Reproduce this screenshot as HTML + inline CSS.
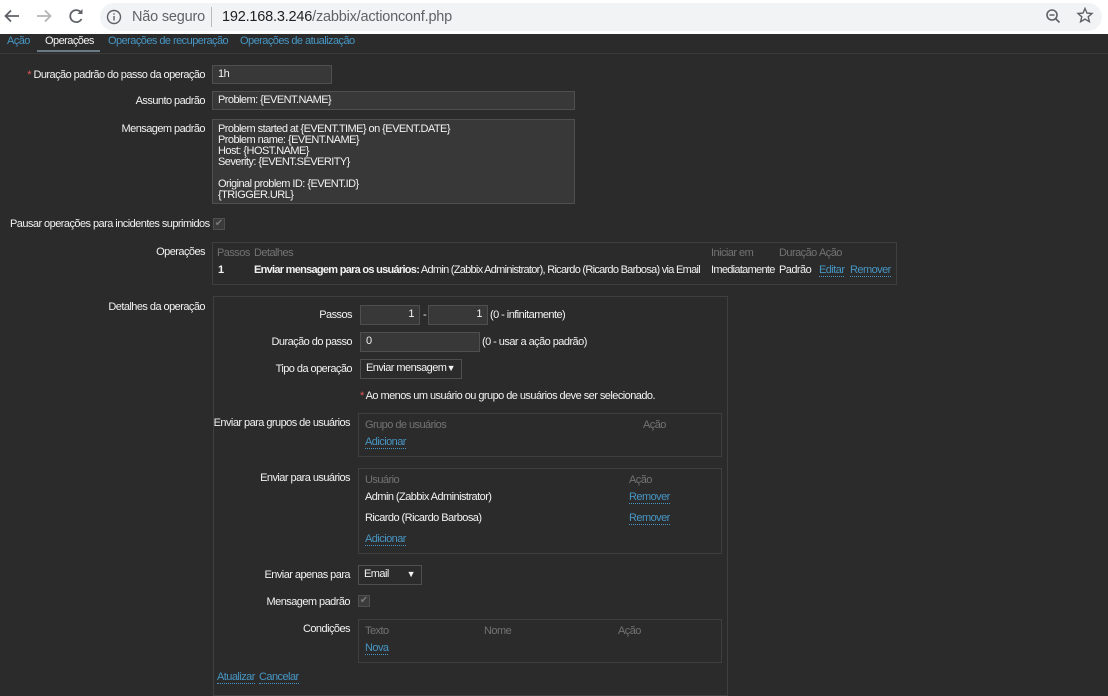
<!DOCTYPE html>
<html><head><meta charset="utf-8"><style>
*{margin:0;padding:0;box-sizing:border-box}
body{width:1108px;height:689px;overflow:hidden;background:#2b2b2b;position:relative;font-family:"Liberation Sans",sans-serif;font-size:11px;color:#f2f2f2;letter-spacing:-0.55px}
.a{position:absolute;white-space:nowrap;line-height:13px}
.r{text-align:right}
.g{color:#737373}
.k{color:#4796c4;border-bottom:1px dotted #4796c4;line-height:12px}
.in{position:absolute;background:#383838;border:1px solid #4f4f4f;color:#f2f2f2;padding:0 5px;line-height:17px;white-space:nowrap}
.box{position:absolute;border:1px solid #3f3f3f}
.cb{position:absolute;width:12px;height:12px;background:#3b3b3b;border:1px solid #4f4f4f;color:#777;font-size:10px;line-height:10px;text-align:center;letter-spacing:0}
.b{font-weight:bold}
</style></head><body>
<div style="position:absolute;left:0;top:0;width:1108px;height:34px;background:#fff"></div>
<div style="position:absolute;left:100px;top:3px;width:1002px;height:28px;background:#f1f3f4;border-radius:14px"></div>
<svg style="position:absolute;left:0;top:0" width="110" height="34">
<path d="M19 16H6M11 10.5L5.5 16 11 21.5" stroke="#5f6368" stroke-width="1.8" fill="none"/>
<path d="M37 16H50M45 10.5L50.5 16 45 21.5" stroke="#b5b5b5" stroke-width="1.8" fill="none"/>
<path d="M81 12.5A6 6 0 1 0 81.5 19" stroke="#5f6368" stroke-width="1.8" fill="none"/><path d="M82.5 9v5h-5z" fill="#5f6368"/>
</svg>
<svg style="position:absolute;left:105px;top:8px" width="18" height="18"><circle cx="9" cy="9" r="6.5" stroke="#5f6368" stroke-width="1.4" fill="none"/><rect x="8.3" y="8" width="1.4" height="4.5" fill="#5f6368"/><rect x="8.3" y="5.3" width="1.4" height="1.4" fill="#5f6368"/></svg>
<div class="a" style="left:132px;top:8px;font-size:14.5px;line-height:18px;color:#5f6368;letter-spacing:-0.2px">Não seguro</div>
<div style="position:absolute;left:211px;top:7px;width:1px;height:20px;background:#bbb"></div>
<div class="a" style="left:222px;top:8px;font-size:14.5px;line-height:18px;color:#202124;letter-spacing:-0.2px">192.168.3.246<span style="color:#5f6368">/zabbix/actionconf.php</span></div>
<svg style="position:absolute;left:1040px;top:6px" width="60" height="22"><circle cx="12" cy="9" r="5" stroke="#5f6368" stroke-width="1.6" fill="none"/><path d="M9.5 9h5M15.5 12.5l4 4" stroke="#5f6368" stroke-width="1.6"/><path d="M45 2.5l2 4.6 5 .4-3.8 3.3 1.2 4.9-4.4-2.6-4.4 2.6 1.2-4.9-3.8-3.3 5-.4z" stroke="#5f6368" stroke-width="1.4" fill="none"/></svg>
<div style="position:absolute;left:0;top:53px;width:1108px;height:1px;background:#3a3a3a"></div>
<div class="a" style="left:7px;top:35px;color:#4796c4">Ação</div>
<div class="a" style="left:45px;top:35px">Operações</div>
<div style="position:absolute;left:37px;top:50px;width:63px;height:2px;background:#6a7a84"></div>
<div class="a" style="left:108px;top:35px;color:#4796c4">Operações de recuperação</div>
<div class="a" style="left:240px;top:35px;color:#4796c4">Operações de atualização</div>

<div class="a r" style="right:903px;top:69px"><span style="color:#e45959">*</span> Duração padrão do passo da operação</div>
<div class="in" style="left:212px;top:65px;width:120px;height:19px">1h</div>
<div class="a r" style="right:903px;top:95px">Assunto padrão</div>
<div class="in" style="left:212px;top:91px;width:363px;height:19px">Problem: {EVENT.NAME}</div>
<div class="a r" style="right:903px;top:123px">Mensagem padrão</div>
<div class="in" style="left:212px;top:119px;width:363px;height:85px;line-height:11px;padding-top:4px">Problem started at {EVENT.TIME} on {EVENT.DATE}<br>Problem name: {EVENT.NAME}<br>Host: {HOST.NAME}<br>Severity: {EVENT.SEVERITY}<br><br>Original problem ID: {EVENT.ID}<br>{TRIGGER.URL}</div>
<div class="a" style="left:10px;top:218px">Pausar operações para incidentes suprimidos</div>
<div class="cb" style="left:213px;top:218px">✔</div>

<div class="a r" style="right:903px;top:246px">Operações</div>
<div class="box" style="left:212px;top:242px;width:685px;height:43px"></div>
<div class="a g" style="left:217px;top:247px">Passos</div>
<div class="a g" style="left:254px;top:247px">Detalhes</div>
<div class="a g" style="left:711px;top:247px">Iniciar em</div>
<div class="a g" style="left:779px;top:247px">Duração</div>
<div class="a g" style="left:819px;top:247px">Ação</div>
<div class="a b" style="left:218px;top:264px">1</div>
<div class="a" style="left:254px;top:264px;letter-spacing:-0.72px"><b>Enviar mensagem para os usuários:</b> Admin (Zabbix Administrator), Ricardo (Ricardo Barbosa) via Email</div>
<div class="a" style="left:711px;top:264px;letter-spacing:-0.7px">Imediatamente</div>
<div class="a" style="left:779px;top:264px">Padrão</div>
<div class="a k" style="left:819px;top:264px">Editar</div>
<div class="a k" style="left:850px;top:264px">Remover</div>

<div class="a r" style="right:903px;top:301px">Detalhes da operação</div>
<div class="box" style="left:213px;top:296px;width:515px;height:400px"></div>
<div class="a r" style="right:756px;top:309px">Passos</div>
<div class="in r" style="left:360px;top:305px;width:60px;height:20px">1</div>
<div class="a" style="left:423px;top:309px">-</div>
<div class="in r" style="left:428px;top:305px;width:60px;height:20px">1</div>
<div class="a" style="left:490px;top:309px">(0 - infinitamente)</div>
<div class="a r" style="right:756px;top:336px">Duração do passo</div>
<div class="in" style="left:360px;top:332px;width:120px;height:20px">0</div>
<div class="a" style="left:482px;top:336px">(0 - usar a ação padrão)</div>
<div class="a r" style="right:756px;top:363px">Tipo da operação</div>
<div class="in" style="left:360px;top:359px;width:102px;height:20px;background:#2b2b2b">Enviar mensagem <span style="position:absolute;right:6px;font-size:9px">▼</span></div>
<div class="a" style="left:360px;top:390px"><span style="color:#e45959">*</span> Ao menos um usuário ou grupo de usuários deve ser selecionado.</div>

<div class="a r" style="right:758px;top:417px">Enviar para grupos de usuários</div>
<div class="box" style="left:358px;top:413px;width:364px;height:44px"></div>
<div class="a g" style="left:365px;top:419px">Grupo de usuários</div>
<div class="a g" style="left:643px;top:419px">Ação</div>
<div class="a k" style="left:365px;top:436px">Adicionar</div>

<div class="a r" style="right:758px;top:472px">Enviar para usuários</div>
<div class="box" style="left:358px;top:468px;width:364px;height:86px"></div>
<div class="a g" style="left:365px;top:474px">Usuário</div>
<div class="a g" style="left:629px;top:474px">Ação</div>
<div class="a" style="left:365px;top:491px">Admin (Zabbix Administrator)</div>
<div class="a k" style="left:629px;top:491px">Remover</div>
<div class="a" style="left:365px;top:512px">Ricardo (Ricardo Barbosa)</div>
<div class="a k" style="left:629px;top:512px">Remover</div>
<div class="a k" style="left:365px;top:533px">Adicionar</div>

<div class="a r" style="right:758px;top:569px">Enviar apenas para</div>
<div class="in" style="left:358px;top:565px;width:64px;height:20px;background:#2b2b2b">Email <span style="position:absolute;right:6px;font-size:9px">▼</span></div>
<div class="a r" style="right:758px;top:596px">Mensagem padrão</div>
<div class="cb" style="left:358px;top:595px">✔</div>
<div class="a r" style="right:758px;top:623px">Condições</div>
<div class="box" style="left:358px;top:619px;width:364px;height:44px"></div>
<div class="a g" style="left:365px;top:625px">Texto</div>
<div class="a g" style="left:484px;top:625px">Nome</div>
<div class="a g" style="left:618px;top:625px">Ação</div>
<div class="a k" style="left:365px;top:642px">Nova</div>
<div class="a k" style="left:217px;top:671px">Atualizar</div>
<div class="a k" style="left:259px;top:671px">Cancelar</div>
</body></html>
